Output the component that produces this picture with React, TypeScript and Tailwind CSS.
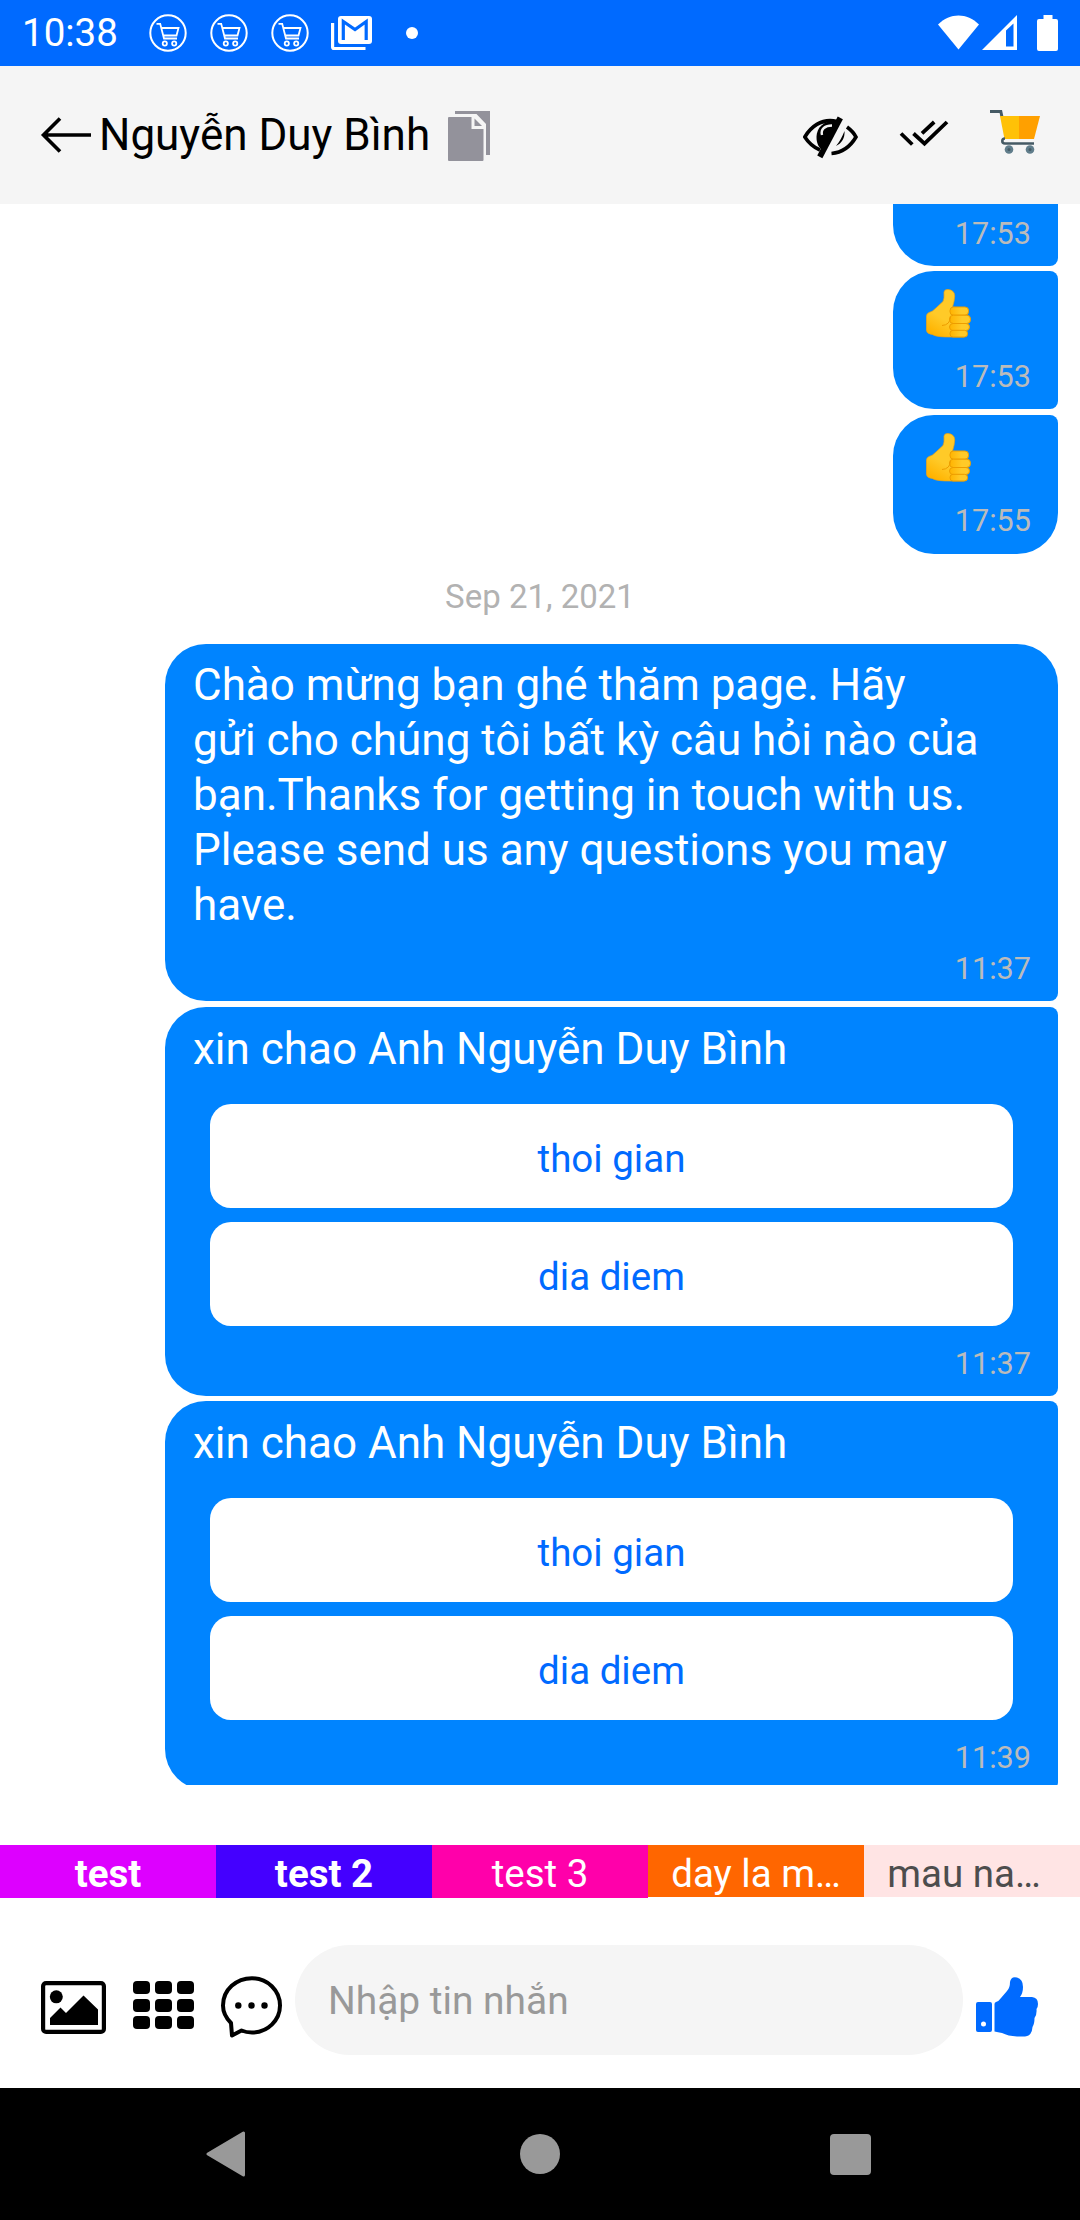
import React from "react";

const CartBadge: React.FC = () => (
  <svg width="38" height="38" viewBox="0 0 38 38" fill="none" stroke="white">
    <circle cx="19" cy="19" r="17.7" strokeWidth="2" />
    <path
      d="M7.5 9.8H11.2L15 24.5H28M12.2 14H29.5L27.5 21.5H14.2"
      strokeWidth="1.8"
    />
    <circle cx="15.8" cy="29.5" r="2.1" strokeWidth="1.8" />
    <circle cx="25.2" cy="29.5" r="2.1" strokeWidth="1.8" />
  </svg>
);

const MailIcon: React.FC = () => (
  <svg width="42" height="36" viewBox="0 0 42 36" fill="none">
    <path d="M1.6 8V32Q1.6 33.5 3 33.5H34.5" stroke="white" strokeWidth="3.2" />
    <rect x="7" y="1" width="34" height="28" rx="3" fill="white" />
    <path
      d="M12.3 25V6.5L24 14.5L35.2 6.5V25"
      stroke="#006aff"
      strokeWidth="3.2"
    />
  </svg>
);

const StatusBar: React.FC = () => (
  <div className="flex h-[66px] shrink-0 items-center bg-[#006aff] pl-[22px] pr-[22px] text-white">
    <span className="w-[127px] text-[38.5px] leading-none">10:38</span>
    <div className="flex gap-[23px]">
      <CartBadge />
      <CartBadge />
      <CartBadge />
    </div>
    <div className="ml-[22px]">
      <MailIcon />
    </div>
    <div className="ml-[33px] size-3 rounded-full bg-white" />
    <svg
      className="ml-auto"
      width="120"
      height="36"
      viewBox="0 0 120 36"
      fill="white"
    >
      <path d="M0 9.5C12 -2.5 29 -2.5 41 9.5L20.5 34.5Z" />
      <path
        fillRule="evenodd"
        d="M44 35L79 0V35ZM68 15.5V31.5H75.5V8.5Z"
      />
      <path d="M105.5 0H114.5V4H118Q120 4 120 6V34Q120 36 118 36H101Q99 36 99 34V6Q99 4 101 4H105.5Z" />
    </svg>
  </div>
);

const Header: React.FC = () => (
  <div className="flex h-[138px] shrink-0 items-center bg-[#f5f5f5] pl-[40px] pr-[38px]">
    <svg
      width="52"
      height="38"
      viewBox="0 0 52 38"
      fill="none"
      stroke="black"
      strokeWidth="3.6"
    >
      <path d="M51 19H3M20 2.5L3.5 19L20 35.5" />
    </svg>
    <span className="ml-[7px] text-[44px] leading-none text-black">
      Nguyễn Duy Bình
    </span>
    <svg
      className="ml-[18px] mt-[2px]"
      width="42"
      height="50"
      viewBox="0 0 42 50"
      fill="#93929b"
    >
      <path d="M7 0H42V44H38V13L28.5 3H7Z" />
      <path d="M0 7Q0 6 1 6H23.5V18H35.5V49Q35.5 50 34.5 50H1Q0 50 0 49Z" />
      <path d="M26.5 7.5V15H34Z" />
    </svg>
    <svg
      className="ml-auto mt-[4px]"
      width="56"
      height="46"
      viewBox="3 0 56 46"
      fill="none"
    >
      <path
        d="M37 7.5C21 3.5 10 14 4.8 23C9 29.5 14 33.5 20 36"
        stroke="black"
        strokeWidth="3.6"
      />
      <path
        d="M37 6.5C23 6.5 16.5 14 16.5 23C16.5 29 18.5 33 22 36L38 9Z"
        fill="black"
      />
      <path
        d="M22 21C20.5 15 25 11.5 32 11.5"
        stroke="#f5f5f5"
        strokeWidth="2.4"
      />
      <path d="M40.3 3.8L19.8 42.8" stroke="black" strokeWidth="5.8" />
      <path
        d="M47 13C51 16 54 19 56 23C51 31.5 43 38.5 31.5 39.5"
        stroke="black"
        strokeWidth="3.6"
      />
      <path d="M44.5 17C45 24 42 29 36 32C40 27 42 23 44.5 17Z" fill="black" />
    </svg>
    <svg
      className="ml-[40px]"
      width="50"
      height="30"
      viewBox="0 0 50 30"
      fill="none"
      stroke="black"
      strokeWidth="3.8"
    >
      <path d="M2 13.5L13.3 24.5M14.5 13.5L25.5 23.7L48 2M23 13.3L35.2 2" />
    </svg>
    <svg className="-mt-[4px] ml-[41px]" width="52" height="46" viewBox="0 0 52 46">
      <path d="M0 1.5H10.8L12 7" fill="none" stroke="#455a64" strokeWidth="3" />
      <path d="M10 6H29V29H14.5Z" fill="#ffc107" />
      <path d="M29 6H50L44 29H29Z" fill="#ffa000" />
      <path
        d="M15 28.5Q12.3 28.5 12.3 31Q12.3 33.5 15 33.5H44"
        fill="none"
        stroke="#455a64"
        strokeWidth="2.6"
      />
      <circle cx="19" cy="39.5" r="4.3" fill="#607d8b" />
      <circle cx="40" cy="39.5" r="4.3" fill="#607d8b" />
      <circle cx="19" cy="39.5" r="1.5" fill="#455a64" />
      <circle cx="40" cy="39.5" r="1.5" fill="#455a64" />
    </svg>
  </div>
);

const ThumbEmoji: React.FC = () => (
  <svg width="46" height="49" viewBox="0 0 46 49">
    <defs>
      <linearGradient id="thumb" x1="0.7" y1="0" x2="0.2" y2="1">
        <stop offset="0.6" stopColor="#ffca28" />
        <stop offset="0.95" stopColor="#ffb300" />
      </linearGradient>
      <linearGradient id="finger" x1="0" y1="0" x2="1" y2="0">
        <stop offset="0" stopColor="#ffb300" />
        <stop offset="0.6" stopColor="#ffca28" />
      </linearGradient>
    </defs>
    <path
      d="M0.5 27Q0.5 24.5 3 23.5Q6 23 10 19L17 12.5Q18.5 10 18 3Q18.5 0 22 0.5Q28.5 1 28.7 7Q28.5 12 26.5 18L38 20V48H24Q13 48 8.5 46.5Q6 45 4 45Q0.5 44 0.5 41Z"
      fill="url(#thumb)"
      stroke="#f0a310"
      strokeWidth="0.7"
    />
    <g fill="url(#finger)" stroke="#ed9d00" strokeWidth="1">
      <rect x="24" y="18" width="18.5" height="8.2" rx="3.5" />
      <rect x="23.5" y="26.2" width="21" height="8.3" rx="3.8" />
      <rect x="23.5" y="34.5" width="20" height="7" rx="3.5" />
      <rect x="24" y="41.3" width="17.5" height="6.7" rx="3" />
    </g>
    <path
      d="M16 36.5Q24 36 24.5 28"
      fill="none"
      stroke="#ed9d00"
      strokeWidth="1"
    />
  </svg>
);

const Time: React.FC<{ value: string }> = ({ value }) => (
  <span className="self-end pr-[27px] text-[30.6px] leading-[36px] text-[#bbb]">
    {value}
  </span>
);

type QuickReplyProps = {
  time: string;
  className: string;
};

const QuickReplyBubble: React.FC<QuickReplyProps> = ({ time, className }) => (
  <div
    className={`flex w-[893px] shrink-0 flex-col rounded-l-[41px] rounded-r-[8px] bg-[#0084ff] pt-[15px] ${className}`}
  >
    <p className="pl-[28px] text-[44px] leading-[55px] text-white">
      xin chao Anh Nguyễn Duy Bình
    </p>
    <div className="mx-[45px] mt-[27px] flex flex-col gap-[14px]">
      {["thoi gian", "dia diem"].map((label) => (
        <button
          key={label}
          className="h-[104px] rounded-[21px] bg-white pt-[5px] text-[38.5px] text-[#006aff]"
        >
          {label}
        </button>
      ))}
    </div>
    <div className="mt-[20px] flex flex-col">
      <Time value={time} />
    </div>
  </div>
);

const Messages: React.FC = () => (
  <div className="flex h-[1581px] shrink-0 flex-col items-end overflow-hidden pr-[22px]">
    <div className="flex h-[62px] w-[165px] shrink-0 flex-col rounded-bl-[41px] rounded-br-[8px] bg-[#0084ff] pt-[12px]">
      <Time value="17:53" />
    </div>
    <div className="mt-[5px] flex h-[138px] w-[165px] shrink-0 flex-col rounded-l-[41px] rounded-r-[8px] bg-[#0084ff] pt-[18px]">
      <div className="ml-[33px] h-[49px]">
        <ThumbEmoji />
      </div>
      <div className="mt-[21px] flex flex-col">
        <Time value="17:53" />
      </div>
    </div>
    <div className="mt-[6px] flex h-[139px] w-[165px] shrink-0 flex-col rounded-[41px] rounded-tr-[8px] bg-[#0084ff] pt-[18px]">
      <div className="ml-[33px] h-[49px]">
        <ThumbEmoji />
      </div>
      <div className="mt-[21px] flex flex-col">
        <Time value="17:55" />
      </div>
    </div>
    <p className="flex h-[90px] w-full shrink-0 items-center justify-center pb-[5px] pl-[22px] text-[33px] text-[#b2b2b2]">
      Sep 21, 2021
    </p>
    <div className="flex h-[357px] w-[893px] shrink-0 flex-col rounded-[41px] rounded-br-[8px] bg-[#0084ff] pt-[14px]">
      <p className="pl-[28px] text-[44px] leading-[55px] text-white">
        Chào mừng bạn ghé thăm page. Hãy
        <br />
        gửi cho chúng tôi bất kỳ câu hỏi nào của
        <br />
        bạn.Thanks for getting in touch with us.
        <br />
        Please send us any questions you may
        <br />
        have.
      </p>
      <div className="mt-[18px] flex flex-col">
        <Time value="11:37" />
      </div>
    </div>
    <QuickReplyBubble time="11:37" className="mt-[6px] h-[389px]" />
    <QuickReplyBubble time="11:39" className="mt-[5px] h-[389px]" />
  </div>
);

const tags = [
  { label: "test", style: "h-[53px] bg-[#dd00ff] font-bold text-white" },
  { label: "test 2", style: "h-[53px] bg-[#4400ff] font-bold text-white" },
  { label: "test 3", style: "h-[53px] bg-[#ff00aa] text-white" },
  { label: "day la m…", style: "h-[52px] bg-[#ff6600] text-white" },
  { label: "mau na…", style: "h-[52px] bg-[#ffe4e4] pr-[16px] text-[#4d4d4d]" },
];

const TagRow: React.FC = () => (
  <div className="mt-[60px] grid h-[53px] shrink-0 grid-cols-5">
    {tags.map((tag) => (
      <div
        key={tag.label}
        className={`whitespace-nowrap pt-[4px] text-center text-[38.5px] leading-[49px] ${tag.style}`}
      >
        {tag.label}
      </div>
    ))}
  </div>
);

const Composer: React.FC = () => (
  <div className="mt-[47px] flex h-[110px] shrink-0 items-center pl-[41px] pr-[42px]">
    <svg className="mt-[14px]" width="65" height="53" viewBox="0 0 65 53">
      <rect
        x="2.1"
        y="2.1"
        width="60.8"
        height="48.8"
        rx="3"
        fill="none"
        stroke="black"
        strokeWidth="4.2"
      />
      <circle cx="15.3" cy="15.8" r="6.5" />
      <path d="M9 44V37L19.5 26.5L25 32L42.5 14.5L57 28.5V44Z" />
    </svg>
    <div className="ml-[27px] mt-[10px] grid h-[48px] w-[61px] grid-cols-3 gap-[4.5px]">
      {Array.from({ length: 9 }).map((_, index) => (
        <div key={index} className="rounded-[4px] bg-black" />
      ))}
    </div>
    <svg
      className="ml-[27px] mt-[14px]"
      width="62"
      height="62"
      viewBox="0 0 62 62"
    >
      <path
        d="M11 59.5L10 47C5 42 2 36 2 29.5C2 13.5 15.5 2.2 31 2.2C46.5 2.2 59 14.5 59 29.5C59 44.5 46.5 56.5 31 56.5C27 56.5 24 56 20.5 54.5Z"
        fill="none"
        stroke="black"
        strokeWidth="4"
        strokeLinejoin="round"
      />
      <circle cx="17.3" cy="29.5" r="3.2" />
      <circle cx="30.5" cy="29.5" r="3.2" />
      <circle cx="43.5" cy="29.5" r="3.2" />
    </svg>
    <div className="ml-[12px] flex h-[110px] w-[668px] items-center rounded-full bg-[#f5f5f5] pl-[33px] pt-[2px] text-[38.9px] text-[#999]">
      Nhập tin nhắn
    </div>
    <svg
      className="ml-[13px] mt-[14px]"
      width="62"
      height="60"
      viewBox="0 0 62 60"
      fill="#006aff"
    >
      <path
        fillRule="evenodd"
        d="M2 25H14Q16 25 16 27V53Q16 55 14 55H2Q0 55 0 53V27Q0 25 2 25ZM7.5 44.5A2.5 2.5 0 1 0 7.5 49.5A2.5 2.5 0 1 0 7.5 44.5Z"
      />
      <path d="M18.5 27Q18.5 25.5 20 25Q23 24 25 21L31 14Q34 11 34 5Q35 -1 41 0.5Q47 2 47 10Q47 16 44 20H56Q62 20.5 62 27Q62 30 60.5 32Q61 38 58.5 41Q58.5 47 56.5 50Q56 59 49 59.5H41Q32 59 26 56Q22 55 18.5 54.5Z" />
    </svg>
  </div>
);

const NavBar: React.FC = () => (
  <div className="mt-auto flex h-[132px] shrink-0 items-center justify-between bg-black pl-[206px] pr-[209px]">
    <svg width="44" height="46" viewBox="0 0 44 46">
      <path
        d="M2 23L37.5 2V44Z"
        fill="#999"
        stroke="#999"
        strokeWidth="3"
        strokeLinejoin="round"
      />
    </svg>
    <div className="size-10 rounded-full bg-[#999]" />
    <div className="size-[41px] rounded-[4px] bg-[#999]" />
  </div>
);

export default function App() {
  return (
    <div className="flex h-[2220px] w-[1080px] flex-col overflow-hidden bg-white font-['Roboto',sans-serif]">
      <StatusBar />
      <Header />
      <Messages />
      <TagRow />
      <Composer />
      <NavBar />
    </div>
  );
}
